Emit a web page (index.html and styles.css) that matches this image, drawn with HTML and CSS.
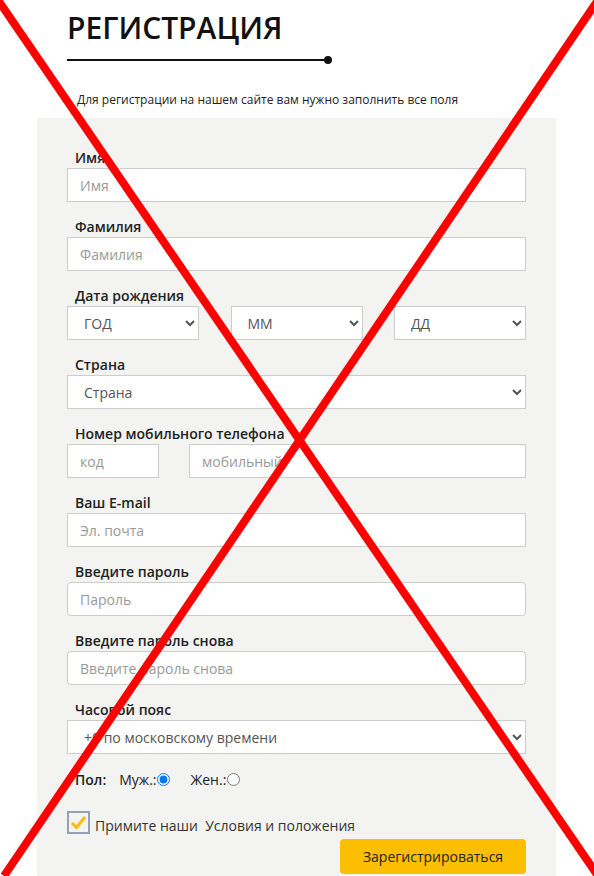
FILE: index.html
```html
<!DOCTYPE html>
<html lang="ru">
<head>
    <meta charset="UTF-8">
    <meta name="viewport" content="width=device-width, initial-scale=1.0">
    <title>Регистрация</title>
    <link rel="stylesheet" href="styles.css">
</head>
<body>
    <div class="page">
        <div class="page-head">
            <h1>РЕГИСТРАЦИЯ</h1>
            <div class="title-line"></div>
            <p class="intro">Для регистрации на нашем сайте вам нужно заполнить все поля</p>
        </div>

        <form class="reg-form">
            <div class="field">
                <label>Имя</label>
                <input class="text-input" type="text" placeholder="Имя">
            </div>
            <div class="field">
                <label>Фамилия</label>
                <input class="text-input" type="text" placeholder="Фамилия">
            </div>
            <div class="field">
                <label>Дата рождения</label>
                <div class="date-row">
                    <select class="select-input"><option>ГОД</option></select>
                    <select class="select-input"><option>ММ</option></select>
                    <select class="select-input"><option>ДД</option></select>
                </div>
            </div>
            <div class="field">
                <label>Страна</label>
                <select class="select-input"><option>Страна</option></select>
            </div>
            <div class="field">
                <label>Номер мобильного телефона</label>
                <div class="phone-row">
                    <input class="text-input code-input" type="text" placeholder="код">
                    <input class="text-input" type="text" placeholder="мобильный">
                </div>
            </div>
            <div class="field">
                <label>Ваш E-mail</label>
                <input class="text-input" type="email" placeholder="Эл. почта">
            </div>
            <div class="field">
                <label>Введите пароль</label>
                <input class="text-input rounded" type="password" placeholder="Пароль">
            </div>
            <div class="field">
                <label>Введите пароль снова</label>
                <input class="text-input rounded" type="password" placeholder="Введите пароль снова">
            </div>
            <div class="field">
                <label>Часовой пояс</label>
                <select class="select-input"><option>+0 по московскому времени</option></select>
            </div>

            <div class="gender-row">
                <span class="gender-title">Пол:</span>
                <label class="gender-option">Муж.:<input type="radio" name="gender" checked></label>
                <label class="gender-option">Жен.:<input type="radio" name="gender"></label>
            </div>

            <div class="terms-row">
                <span class="check-box">
                    <svg width="17" height="15" viewBox="0 0 17 15">
                        <path d="M2 8 L6.5 12.5 L15 2" fill="none" stroke="#fbbc05" stroke-width="3"/>
                    </svg>
                </span>
                <span class="terms-text">Примите наши &nbsp;Условия и положения</span>
            </div>

            <button type="button" class="submit-button">Зарегистрироваться</button>
        </form>
    </div>

    <svg class="cross" width="594" height="876" viewBox="0 0 594 876">
        <line x1="-2" y1="0" x2="598" y2="876" stroke="#ff0000" stroke-width="8"/>
        <line x1="598" y1="0" x2="4" y2="876" stroke="#ff0000" stroke-width="8"/>
    </svg>
</body>
</html>
```

FILE: styles.css
```css
body {
    margin: 0;
    font-family: "Open Sans", "Liberation Sans", sans-serif;
    background-color: #fff;
    color: #222;
}

.page {
    padding: 0 38px 0 37px;
}

.page-head {
    padding-left: 30px;
}

h1 {
    margin: 7px 0 0 0;
    font-size: 30px;
    line-height: 41px;
    font-weight: 600;
    color: #111;
}

.title-line {
    position: relative;
    width: 261px;
    height: 2px;
    margin-top: 11px;
    background-color: #111;
}

.title-line::after {
    content: "";
    position: absolute;
    right: -4px;
    top: -3px;
    width: 8px;
    height: 8px;
    border-radius: 50%;
    background-color: #111;
}

.intro {
    margin: 30px 0 0 10px;
    font-size: 12px;
    line-height: 18px;
    color: #222;
}

.reg-form {
    margin-top: 9px;
    background-color: #f3f3f1;
    padding: 30px 30px 30px 30px;
}

.field {
    display: flex;
    flex-direction: column;
    margin-bottom: 15px;
}

.field > label {
    padding-left: 8px;
    font-size: 14px;
    line-height: 20px;
    font-weight: 600;
    color: #222;
}

.text-input,
.select-input {
    box-sizing: border-box;
    width: 100%;
    height: 34px;
    margin: 0;
    border: 1px solid #ccc;
    border-radius: 0;
    background-color: #fff;
    font-family: inherit;
    font-size: 14px;
    color: #555;
    outline: none;
}

.text-input {
    padding: 0 12px;
}

.select-input {
    padding: 0 8px 0 12px;
}

.text-input::placeholder {
    color: #999;
}

.text-input.rounded {
    border-radius: 4px;
}

.date-row {
    display: grid;
    grid-template-columns: repeat(3, 132px);
    justify-content: space-between;
}

.phone-row {
    display: flex;
    gap: 30px;
}

.code-input {
    width: 92px;
    flex-shrink: 0;
}

.gender-row {
    display: flex;
    align-items: center;
    height: 20px;
    margin-top: 2px;
    padding-left: 8px;
    font-size: 14px;
    color: #222;
}

.gender-title {
    font-weight: 600;
    margin-right: 13px;
}

.gender-option {
    display: flex;
    align-items: center;
    margin-right: 20px;
}

.gender-option input {
    width: 13px;
    height: 13px;
    margin: 0 0 0 1px;
}

.terms-row {
    display: flex;
    align-items: flex-end;
    margin-top: 22px;
}

.check-box {
    box-sizing: border-box;
    width: 23px;
    height: 23px;
    border: 2px solid #9aa0b4;
    display: flex;
    align-items: center;
    justify-content: center;
}

.terms-text {
    margin-left: 5px;
    margin-bottom: -2px;
    font-size: 14px;
    line-height: 20px;
    color: #333;
}

.submit-button {
    display: block;
    margin: 5px 0 0 auto;
    width: 186px;
    height: 35px;
    border: none;
    border-radius: 4px;
    background-color: #fcbf00;
    font-family: inherit;
    font-size: 14px;
    color: #222;
    cursor: pointer;
}

.cross {
    position: absolute;
    top: 0;
    left: 0;
    pointer-events: none;
}
```
